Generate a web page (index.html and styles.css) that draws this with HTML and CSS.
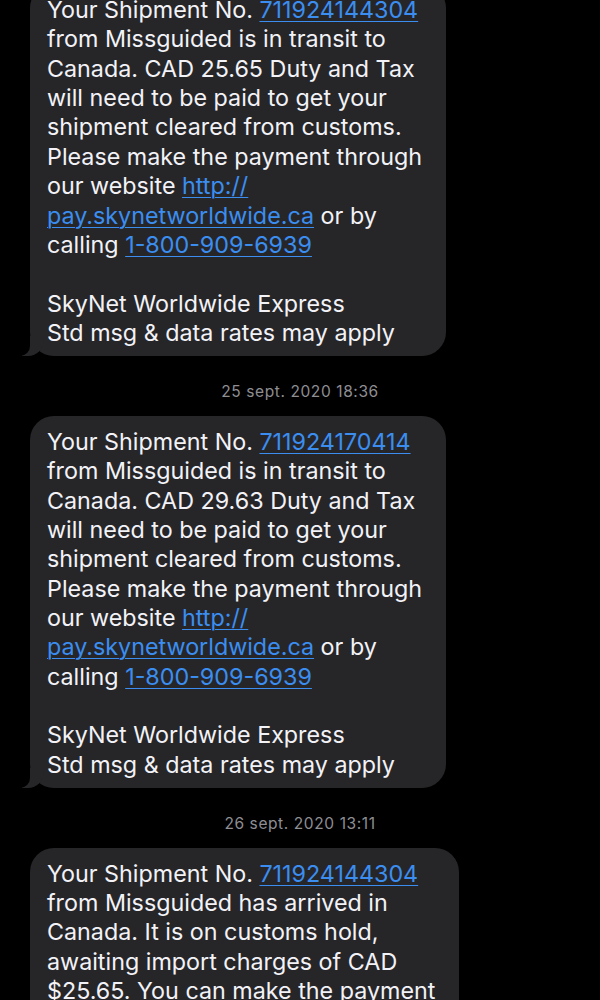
FILE: index.html
```html
<!DOCTYPE html>
<html lang="fr">
<head>
  <meta charset="UTF-8">
  <meta name="viewport" content="width=device-width, initial-scale=1.0">
  <title>Messages</title>
  <link rel="stylesheet" href="styles.css">
</head>
<body>

  <div class="thread">

    <!-- first message, scrolled partly off the top -->
    <div class="msg msg-first">
      Your Shipment No. <a href="#">711924144304</a><br>
      from Missguided is in transit to<br>
      Canada. CAD 25.65 Duty and Tax<br>
      will need to be paid to get your<br>
      shipment cleared from customs.<br>
      Please make the payment through<br>
      our website <a href="#">http://</a><br>
      <a href="#">pay.skynetworldwide.ca</a> or by<br>
      calling <a href="#">1-800-909-6939</a><br>
      <br>
      SkyNet Worldwide Express<br>
      Std msg &amp; data rates may apply
    </div>

    <p class="stamp">25 sept. 2020 18:36</p>

    <div class="msg">
      Your Shipment No. <a href="#">711924170414</a><br>
      from Missguided is in transit to<br>
      Canada. CAD 29.63 Duty and Tax<br>
      will need to be paid to get your<br>
      shipment cleared from customs.<br>
      Please make the payment through<br>
      our website <a href="#">http://</a><br>
      <a href="#">pay.skynetworldwide.ca</a> or by<br>
      calling <a href="#">1-800-909-6939</a><br>
      <br>
      SkyNet Worldwide Express<br>
      Std msg &amp; data rates may apply
    </div>

    <p class="stamp">26 sept. 2020 13:11</p>

    <div class="msg">
      Your Shipment No. <a href="#">711924144304</a><br>
      from Missguided has arrived in<br>
      Canada. It is on customs hold,<br>
      awaiting import charges of CAD<br>
      $25.65. You can make the payment<br>
      through our website <a href="#">http://</a><br>
      <a href="#">pay.skynetworldwide.ca</a> or by<br>
      calling <a href="#">1-800-909-6939</a>
    </div>

  </div>

</body>
</html>
```

FILE: styles.css
```css
body {
  margin: 0;
  background-color: #000;
  font-family: Inter, "Noto Sans", sans-serif;
  overflow: hidden;
}

.thread {
  display: flex;
  flex-direction: column;
  align-items: flex-start;
  padding-left: 30px;
}

.msg {
  position: relative;
  background-color: #262629;
  color: #f2f2f7;
  font-size: 23.3px;
  line-height: 29.36px;
  padding: 11px 24px 9px 17px;
  border-radius: 24px;
  white-space: nowrap;
}

/* little tail at the bottom left of a received bubble */
.msg::before {
  content: "";
  position: absolute;
  left: -8px;
  bottom: 0;
  width: 22px;
  height: 20px;
  background-color: #262629;
  border-bottom-right-radius: 16px;
}

.msg::after {
  content: "";
  position: absolute;
  left: -10px;
  bottom: 0;
  width: 10px;
  height: 20px;
  background-color: #000;
  border-bottom-right-radius: 10px;
}

.msg-first {
  margin-top: -16px;
}

.msg a {
  color: #3b8ef0;
  text-decoration: underline;
  text-underline-offset: 3px;
  text-decoration-thickness: 1px;
}

.stamp {
  align-self: center;
  margin: 26.5px 0 15px -30px;
  color: #8e8e93;
  font-size: 15.5px;
  line-height: 18px;
  letter-spacing: 0.6px;
}
```
